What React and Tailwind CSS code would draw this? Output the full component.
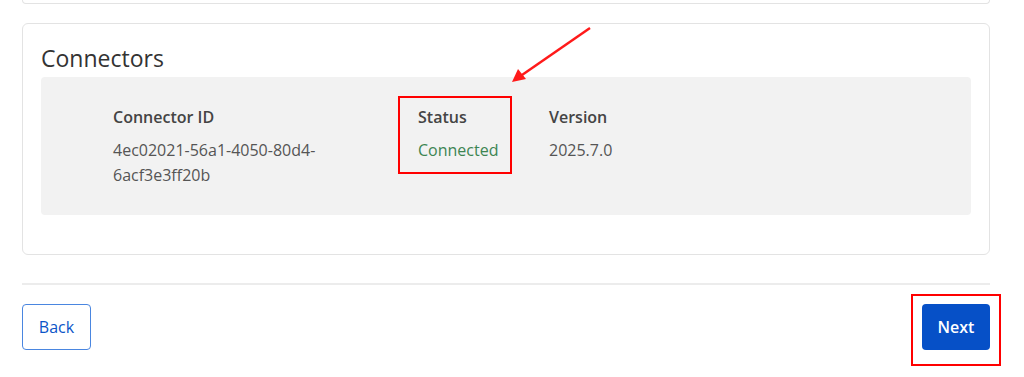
export default function App() {
  return (
    <div className="relative w-[1024px] h-[377px] overflow-hidden bg-white font-['Open_Sans',sans-serif] text-[#333]">
      <div className="mx-[22px] w-[968px]">
        {/* bottom edge of previous card */}
        <div className="h-[4px] border-x border-b border-[#e3e3e3] rounded-b-md" />

        <div className="mt-[19px] h-[232px] border border-[#e3e3e3] rounded-md px-[18px] pt-[18px]">
          <h2 className="text-[23px] leading-[32px] text-[#333]">Connectors</h2>

          <div className="relative mt-[3px] h-[138px] rounded bg-[#f2f2f2] pl-[72px] pt-[28px] flex">
            <div className="w-[240px] mr-[65px]">
              <div className="mb-[8px] text-[16px] leading-[25px] font-semibold text-[#444]">Connector ID</div>
              <div className="text-[16px] leading-[25px] text-[#555]">
                4ec02021-56a1-4050-80d4-
                <br />
                6acf3e3ff20b
              </div>
            </div>
            <div className="w-[131px]">
              <div className="mb-[8px] text-[16px] leading-[25px] font-semibold text-[#444]">Status</div>
              <div className="text-[16px] leading-[25px] text-[#3d8552]">Connected</div>
            </div>
            <div>
              <div className="mb-[8px] text-[16px] leading-[25px] font-semibold text-[#444]">Version</div>
              <div className="text-[16px] leading-[25px] text-[#555]">2025.7.0</div>
            </div>

            <div className="absolute left-[357px] top-[19px] w-[114px] h-[78px] border-2 border-[#ff0000]" />
          </div>
        </div>

        <div className="mt-[28px] h-[2px] bg-[#ececec]" />

        <div className="mt-[19px] flex justify-between items-center">
          <button className="h-[46px] w-[69px] rounded border border-[#4a86e0] text-[#0b55c8] text-[16px]">
            Back
          </button>
          <div className="relative">
            <button className="h-[46px] w-[68px] rounded bg-[#0650c7] text-white text-[16px] font-semibold">
              Next
            </button>
            <div className="absolute -left-[11px] -top-[10px] w-[90px] h-[72px] border-2 border-[#ff0000]" />
          </div>
        </div>
      </div>

      <svg className="absolute left-0 top-0" width="1024" height="377">
        <line x1="590" y1="28" x2="522" y2="75" stroke="#ff1a1a" strokeWidth="2.5" />
        <polygon points="512,82 518,69 526,79" fill="#ff1a1a" />
      </svg>
    </div>
  );
}
